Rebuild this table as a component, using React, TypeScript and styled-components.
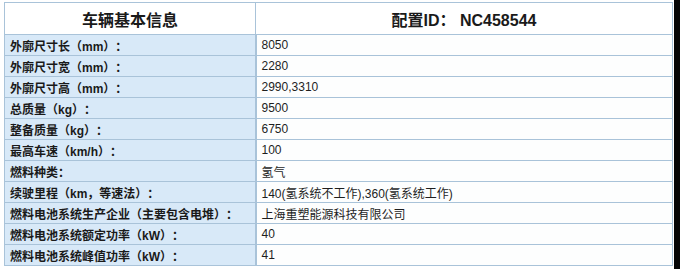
import React from "react";
import styled, { createGlobalStyle } from "styled-components";

const Global = createGlobalStyle`
  html, body { margin: 0; padding: 0; background: #ffffff; }
  #root { width: 680px; height: 269px; overflow: hidden; }
`;

const Page = styled.div`
  display: flex;
  width: 680px;
  height: 269px;
  background: #ffffff;
`;

const TableArea = styled.div`
  flex: 1;
  padding: 2px 1px 0 4px;
`;

const Strip = styled.div`
  width: 6px;
  height: 269px;
  background: #050505;
`;

const Table = styled.table`
  width: 100%;
  border-collapse: collapse;
  table-layout: fixed;
  font-family: "Liberation Sans", Arial, "Noto Sans CJK SC", sans-serif;
  border: 1px solid #a9c3d9;
  text-spacing-trim: space-all;
`;

const HeadCell = styled.th`
  height: 31px;
  padding: 0;
  background: #ffffff;
  border: 1px solid #a9c3d9;
  font-size: 16px;
  font-weight: bold;
  color: #1a1a1a;
  text-align: center;
  vertical-align: middle;
  text-spacing-trim: normal;
`;

const LabelCell = styled.td`
  height: 20px;
  padding: 0 0 0 5px;
  background: #d8e9f8;
  border: 1px solid #a9c3d9;
  border-right: 2px solid #a9c3d9;
  font-size: 12px;
  font-weight: bold;
  color: #1a1a1a;
  white-space: nowrap;
  vertical-align: middle;
`;

const ValueCell = styled.td`
  height: 20px;
  padding: 0 0 0 5px;
  background: #fdfefe;
  border: 1px solid #a9c3d9;
  font-size: 12px;
  color: #1e1e1e;
  white-space: nowrap;
  vertical-align: middle;
`;

const rows: [string, string][] = [
  ["外廓尺寸长（mm）：", "8050"],
  ["外廓尺寸宽（mm）：", "2280"],
  ["外廓尺寸高（mm）：", "2990,3310"],
  ["总质量（kg）：", "9500"],
  ["整备质量（kg）：", "6750"],
  ["最高车速（km/h）：", "100"],
  ["燃料种类：", "氢气"],
  ["续驶里程（km，等速法）：", "140(氢系统不工作),360(氢系统工作)"],
  ["燃料电池系统生产企业（主要包含电堆）：", "上海重塑能源科技有限公司"],
  ["燃料电池系统额定功率（kW）：", "40"],
  ["燃料电池系统峰值功率（kW）：", "41"],
];

export default function App() {
  return (
    <Page>
      <Global />
      <TableArea>
        <Table>
          <colgroup>
            <col style={{ width: 251 }} />
            <col />
          </colgroup>
          <thead>
            <tr>
              <HeadCell>车辆基本信息</HeadCell>
              <HeadCell>配置ID： NC458544</HeadCell>
            </tr>
          </thead>
          <tbody>
            {rows.map(([k, v]) => (
              <tr key={k}>
                <LabelCell>{k}</LabelCell>
                <ValueCell>{v}</ValueCell>
              </tr>
            ))}
          </tbody>
        </Table>
      </TableArea>
      <Strip />
    </Page>
  );
}
